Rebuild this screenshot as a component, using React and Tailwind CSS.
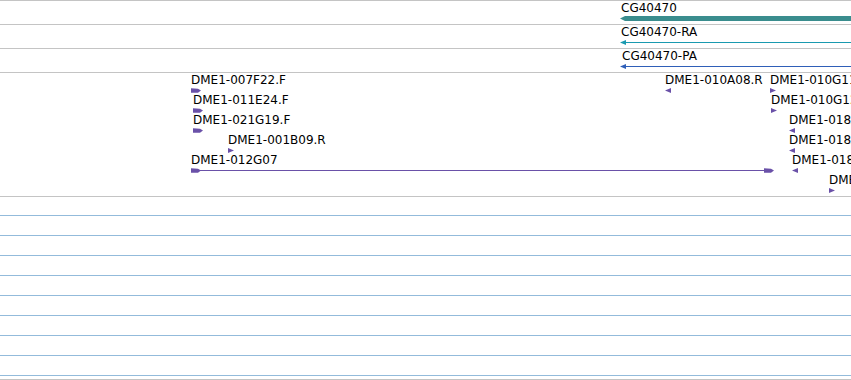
import React from "react";

const PURPLE = "#6a51a8";
const FONT = { fontFamily: '"DejaVu Sans", sans-serif' };

function BoxGlyph({ dir }) {
  return (
    <svg width="10" height="5" viewBox="0 0 10 5" className="block">
      {dir === "f" ? (
        <polygon points="0,0.3 7,0.8 10,2.5 7,4.7 0,4.7" fill={PURPLE} />
      ) : (
        <polygon points="10,0.3 3,0.8 0,2.5 3,4.7 10,4.7" fill={PURPLE} />
      )}
    </svg>
  );
}

function TriGlyph({ dir }) {
  return (
    <svg width="6" height="5" viewBox="0 0 6 5" className="block">
      {dir === "f" ? (
        <polygon points="0,0 6,2.5 0,5" fill={PURPLE} />
      ) : (
        <polygon points="6,0 0,2.5 6,5" fill={PURPLE} />
      )}
    </svg>
  );
}

function SpanGlyph({ width }) {
  const w = width;
  return (
    <svg width={w} height="5" viewBox={`0 0 ${w} 5`} className="block">
      <rect x="5" y="2" width={w - 10} height="1" fill={PURPLE} />
      <polygon points="0,0.3 7,0.8 10,2.5 7,4.7 0,4.7" fill={PURPLE} />
      <polygon points={`${w - 10},0.3 ${w - 3},0.8 ${w},2.5 ${w - 3},4.7 ${w - 10},4.7`} fill={PURPLE} />
    </svg>
  );
}

/* A feature on the genome canvas: label above its glyph, placed at its coordinate */
function Feature({ x, label, glyph }) {
  return (
    <div className="absolute top-0 flex flex-col gap-[2px] pt-[1px]" style={{ left: x }}>
      <div className="whitespace-nowrap text-[12px] leading-[12px] text-black" style={FONT}>
        {label}
      </div>
      {glyph}
    </div>
  );
}

function Arrow({ color, thick }) {
  return (
    <svg width="231" height="6" viewBox="0 0 231 6" className="block">
      {thick ? (
        <polygon points="0,2.5 5,0 231,0 231,5 5,5" fill={color} />
      ) : (
        <>
          <rect x="4" y="2" width="227" height="1" fill={color} />
          <polygon points="0,2.5 6,0 6,5" fill={color} />
        </>
      )}
    </svg>
  );
}

function GeneTrack({ label, color, thick, x = 621 }) {
  return (
    <div className="relative h-[24px] shrink-0 border-b border-[#c4c4c4]">
      <div className="absolute top-0 left-[620px] flex flex-col gap-[2px] pt-[1px]">
        <div className="whitespace-nowrap text-[12px] leading-[12px] text-black" style={{ ...FONT, marginLeft: x - 620 }}>
          {label}
        </div>
        <Arrow color={color} thick={thick} />
      </div>
    </div>
  );
}

const cloneRows = [
  [
    { x: 191, label: "DME1-007F22.F", glyph: <BoxGlyph dir="f" /> },
    { x: 665, label: "DME1-010A08.R", glyph: <TriGlyph dir="r" /> },
    { x: 770, label: "DME1-010G11.F", glyph: <TriGlyph dir="f" /> },
  ],
  [
    { x: 193, label: "DME1-011E24.F", glyph: <BoxGlyph dir="f" /> },
    { x: 771, label: "DME1-010G12.F", glyph: <TriGlyph dir="f" /> },
  ],
  [
    { x: 193, label: "DME1-021G19.F", glyph: <BoxGlyph dir="f" /> },
    { x: 789, label: "DME1-018A01.R", glyph: <TriGlyph dir="r" /> },
  ],
  [
    { x: 228, label: "DME1-001B09.R", glyph: <TriGlyph dir="f" /> },
    { x: 789, label: "DME1-018A02.R", glyph: <TriGlyph dir="r" /> },
  ],
  [
    { x: 191, label: "DME1-012G07", glyph: <SpanGlyph width={583} /> },
    { x: 792, label: "DME1-018B03.R", glyph: <TriGlyph dir="r" /> },
  ],
  [{ x: 829, label: "DME1-019C04.F", glyph: <TriGlyph dir="f" /> }],
];

export default function App() {
  return (
    <div className="w-[851px] h-[380px] overflow-hidden bg-white flex flex-col border-t border-[#c4c4c4]">
      <GeneTrack label="CG40470" color="#3a8d8e" thick />
      <GeneTrack label="CG40470-RA" color="#1a9ab0" />
      <GeneTrack label="CG40470-PA" color="#2f5fb8" x={622} />

      {/* Clone ends track */}
      <div className="h-[124px] shrink-0 border-b border-[#c4c4c4] flex flex-col">
        {cloneRows.map((row, i) => (
          <div key={i} className="relative h-[20px] shrink-0">
            {row.map((f) => (
              <Feature key={f.label} x={f.x} label={f.label} glyph={f.glyph} />
            ))}
          </div>
        ))}
      </div>

      {/* Empty track with grid lines */}
      <div className="h-[18px] shrink-0" />
      <div className="flex flex-col">
        {[0, 1, 2, 3, 4, 5, 6, 7].map((r) => (
          <div key={r} className="h-[20px] shrink-0 border-t border-[#93bbdb]" />
        ))}
      </div>
      <div className="h-[5px] shrink-0 border-t border-[#93bbdb] border-b border-b-[#c4c4c4]" />
    </div>
  );
}
